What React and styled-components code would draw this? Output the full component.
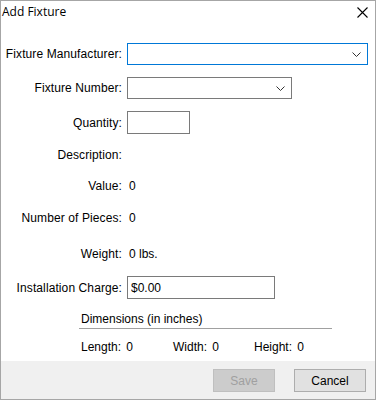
import React from 'react';
import styled, { createGlobalStyle } from 'styled-components';

const GlobalStyle = createGlobalStyle`
  html, body {
    margin: 0;
    padding: 0;
    background: #ffffff;
  }
  body {
    font-family: "Liberation Sans", Arial, sans-serif;
    font-size: 12px;
    color: #000000;
  }
`;

// Styled Components

const Dialog = styled.div`
  box-sizing: border-box;
  width: 376px;
  height: 400px;
  border: 1px solid #a6a6a6;
  display: flex;
  flex-direction: column;
  background: #ffffff;
`;

const TitleBar = styled.div`
  height: 23px;
  display: flex;
  align-items: center;
  justify-content: space-between;
  padding: 0 6px 0 1px;
`;

const Title = styled.span`
  font-family: "Open Sans", "Liberation Sans", sans-serif;
  font-size: 12px;
  line-height: 16px;
  margin-top: -1px;
`;

const CloseButton = styled.button`
  border: none;
  background: transparent;
  padding: 0;
  width: 14px;
  height: 14px;
  display: flex;
  align-items: center;
  justify-content: center;
  cursor: pointer;
`;

const Form = styled.div`
  flex: 1;
  display: flex;
  flex-direction: column;
  padding-top: 19px;
`;

const Row = styled.div`
  display: grid;
  grid-template-columns: 121px auto;
  column-gap: 5px;
  align-items: center;
  height: ${(props) => props.$height || 22}px;
  margin-top: ${(props) => props.$gap || 0}px;
`;

const Label = styled.span`
  text-align: right;
  white-space: nowrap;
  padding-left: 4px;
  letter-spacing: 0.1px;
`;

const Value = styled.span`
  padding-left: 2px;
`;

const SelectBox = styled.div`
  box-sizing: border-box;
  width: ${(props) => props.$width}px;
  height: 22px;
  border: 1px solid ${(props) => (props.$focused ? '#0078d7' : '#7a7a7a')};
  display: flex;
  align-items: center;
  justify-content: flex-end;
  padding-right: 6px;
  background: #ffffff;
`;

const TextBox = styled.input`
  box-sizing: border-box;
  width: ${(props) => props.$width}px;
  height: 23px;
  border: 1px solid #7a7a7a;
  padding: 0 3px;
  font-family: "Liberation Sans", Arial, sans-serif;
  font-size: 12px;
  color: #000000;
  outline: none;
`;

const Dimensions = styled.div`
  margin: 13px 0 0 78px;
  width: 253px;
`;

const DimTitle = styled.div`
  padding: 0 0 2px 2px;
  border-bottom: 1px solid #a0a0a0;
  line-height: 14px;
`;

const DimRow = styled.div`
  display: grid;
  grid-template-columns: 92px 81px auto;
  padding: 11px 0 0 2px;
`;

const DimItem = styled.span`
  word-spacing: 2px;
`;

const Footer = styled.div`
  height: 38px;
  background: #f0f0f0;
  display: flex;
  align-items: center;
  justify-content: flex-end;
  gap: 19px;
  padding-right: 9px;
`;

const Button = styled.button`
  box-sizing: border-box;
  width: ${(props) => props.$width}px;
  height: 23px;
  border: 1px solid ${(props) => (props.disabled ? '#bfbfbf' : '#adadad')};
  background: ${(props) => (props.disabled ? '#cccccc' : '#e1e1e1')};
  color: ${(props) => (props.disabled ? '#a0a0a0' : '#000000')};
  font-family: "Liberation Sans", Arial, sans-serif;
  font-size: 12px;
  padding: 0;
  margin-top: 1px;
`;

// Components

const Chevron = () => (
  <svg width="9" height="5" viewBox="0 0 9 5">
    <path d="M0.5 0.5 L4.5 4.5 L8.5 0.5" fill="none" stroke="#333" strokeWidth="1" />
  </svg>
);

const CloseIcon = () => (
  <svg width="11" height="11" viewBox="0 0 11 11">
    <path d="M0.5 0.5 L10.5 10.5 M10.5 0.5 L0.5 10.5" stroke="#000" strokeWidth="1.1" />
  </svg>
);

const App = () => {
  return (
    <>
      <GlobalStyle />
      <Dialog>
        <TitleBar>
          <Title>Add Fixture</Title>
          <CloseButton aria-label="Close">
            <CloseIcon />
          </CloseButton>
        </TitleBar>
        <Form>
          <Row>
            <Label>Fixture Manufacturer:</Label>
            <SelectBox $width={241} $focused>
              <Chevron />
            </SelectBox>
          </Row>
          <Row $gap={12}>
            <Label>Fixture Number:</Label>
            <SelectBox $width={165}>
              <Chevron />
            </SelectBox>
          </Row>
          <Row $gap={12} $height={23}>
            <Label>Quantity:</Label>
            <TextBox $width={63} />
          </Row>
          <Row $gap={10}>
            <Label>Description:</Label>
            <Value />
          </Row>
          <Row $gap={9}>
            <Label>Value:</Label>
            <Value>0</Value>
          </Row>
          <Row $gap={10}>
            <Label>Number of Pieces:</Label>
            <Value>0</Value>
          </Row>
          <Row $gap={14}>
            <Label>Weight:</Label>
            <Value>0 lbs.</Value>
          </Row>
          <Row $gap={11} $height={23}>
            <Label>Installation Charge:</Label>
            <TextBox $width={148} defaultValue="$0.00" />
          </Row>
          <Dimensions>
            <DimTitle>Dimensions (in inches)</DimTitle>
            <DimRow>
              <DimItem>Length: 0</DimItem>
              <DimItem>Width: 0</DimItem>
              <DimItem>Height: 0</DimItem>
            </DimRow>
          </Dimensions>
        </Form>
        <Footer>
          <Button $width={62} disabled>
            Save
          </Button>
          <Button $width={72}>Cancel</Button>
        </Footer>
      </Dialog>
    </>
  );
};

export default App;
